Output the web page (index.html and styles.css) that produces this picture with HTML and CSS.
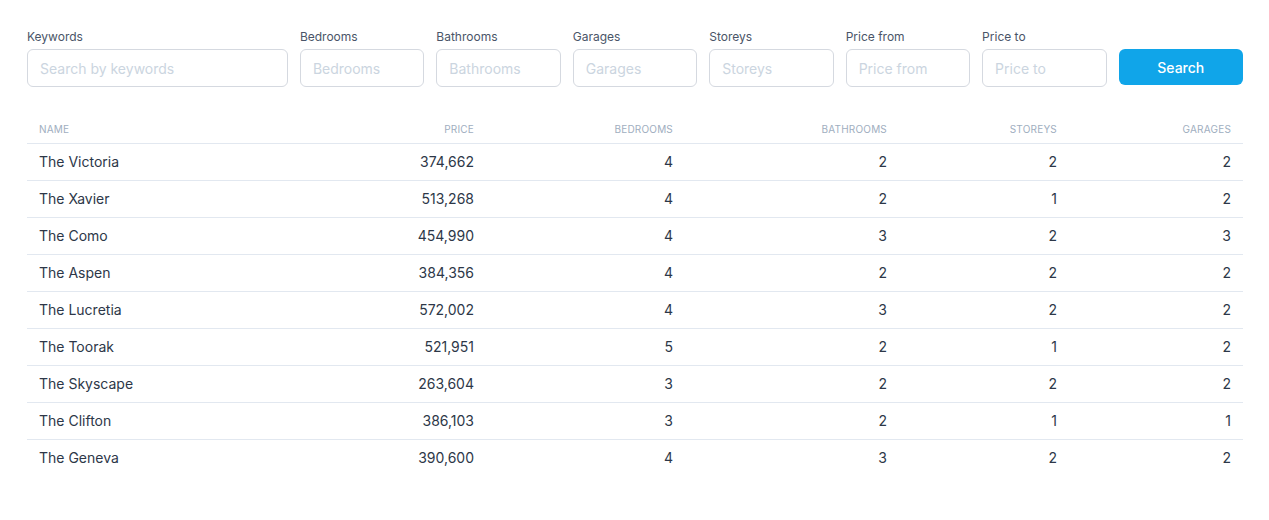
FILE: index.html
```html
<!DOCTYPE html>
<html>
<head>
<meta charset="utf-8">
<link rel="stylesheet" href="styles.css">
</head>
<body>
<div class="page">
  <form class="filters">
    <div class="field wide">
      <label>Keywords</label>
      <input type="text" placeholder="Search by keywords">
    </div>
    <div class="field">
      <label>Bedrooms</label>
      <input type="text" placeholder="Bedrooms">
    </div>
    <div class="field">
      <label>Bathrooms</label>
      <input type="text" placeholder="Bathrooms">
    </div>
    <div class="field">
      <label>Garages</label>
      <input type="text" placeholder="Garages">
    </div>
    <div class="field">
      <label>Storeys</label>
      <input type="text" placeholder="Storeys">
    </div>
    <div class="field">
      <label>Price from</label>
      <input type="text" placeholder="Price from">
    </div>
    <div class="field">
      <label>Price to</label>
      <input type="text" placeholder="Price to">
    </div>
    <div class="field action">
      <button type="button" class="btn">Search</button>
    </div>
  </form>

  <table class="results">
    <colgroup>
      <col class="c-name"><col class="c-price"><col class="c-bed"><col class="c-bath"><col class="c-storey"><col class="c-garage">
    </colgroup>
    <thead>
      <tr><th class="left">Name</th><th>Price</th><th>Bedrooms</th><th>Bathrooms</th><th>Storeys</th><th>Garages</th></tr>
    </thead>
    <tbody>
      <tr><td class="left">The Victoria</td><td>374,662</td><td>4</td><td>2</td><td>2</td><td>2</td></tr>
      <tr><td class="left">The Xavier</td><td>513,268</td><td>4</td><td>2</td><td>1</td><td>2</td></tr>
      <tr><td class="left">The Como</td><td>454,990</td><td>4</td><td>3</td><td>2</td><td>3</td></tr>
      <tr><td class="left">The Aspen</td><td>384,356</td><td>4</td><td>2</td><td>2</td><td>2</td></tr>
      <tr><td class="left">The Lucretia</td><td>572,002</td><td>4</td><td>3</td><td>2</td><td>2</td></tr>
      <tr><td class="left">The Toorak</td><td>521,951</td><td>5</td><td>2</td><td>1</td><td>2</td></tr>
      <tr><td class="left">The Skyscape</td><td>263,604</td><td>3</td><td>2</td><td>2</td><td>2</td></tr>
      <tr><td class="left">The Clifton</td><td>386,103</td><td>3</td><td>2</td><td>1</td><td>1</td></tr>
      <tr><td class="left">The Geneva</td><td>390,600</td><td>4</td><td>3</td><td>2</td><td>2</td></tr>
    </tbody>
  </table>
</div>
</body>
</html>
```
FILE: styles.css
```css
* { box-sizing: border-box; }
html, body { margin: 0; padding: 0; background: #fff; }
body {
  font-family: Inter, "Noto Sans", "Liberation Sans", sans-serif;
  color: #2d3748;
}
.page {
  padding: 29px 26px 0 27px;
}
.filters {
  display: grid;
  grid-template-columns: repeat(9, minmax(0, 1fr));
  column-gap: 12px;
  margin: 0;
}
.field {
  display: flex;
  flex-direction: column;
  min-width: 0;
}
.field.wide { grid-column: span 2; }
.field label {
  font-size: 12px;
  line-height: 16px;
  color: #4a5568;
  margin-bottom: 4px;
  white-space: nowrap;
}
.field input {
  width: 100%;
  min-width: 0;
  height: 38px;
  border: 1px solid #d5d9e0;
  border-radius: 6px;
  padding: 0 12px;
  font-family: inherit;
  font-size: 14px;
  color: #2d3748;
  background: #fff;
  outline: none;
}
.field input::placeholder { color: #cbd5e0; }
.field.action { justify-content: flex-start; padding-top: 20px; }
.btn {
  width: 100%;
  height: 36px;
  border: none;
  border-radius: 6px;
  background: #10a5e9;
  color: #fff;
  font-family: inherit;
  font-size: 14px;
  font-weight: 500;
  cursor: pointer;
}
.results {
  width: 100%;
  border-collapse: collapse;
  table-layout: fixed;
  margin-top: 20px;
}
.c-name { width: 230px; }
.c-price { width: 229px; }
.c-bed { width: 199px; }
.c-bath { width: 214px; }
.c-storey { width: 170px; }
.c-garage { width: 174px; }
.results th {
  font-size: 10px;
  font-weight: 400;
  text-transform: uppercase;
  letter-spacing: 0.02em;
  color: #a0aec0;
  text-align: right;
  padding: 15px 12px 7px;
  line-height: 14px;
  border-bottom: 1px solid #e2e8f0;
}
.results td {
  font-size: 14px;
  line-height: 16px;
  color: #2d3748;
  text-align: right;
  padding: 10px 12px;
  border-bottom: 1px solid #e2e8f0;
}
.results tbody tr:last-child td { border-bottom: none; }
.results .left { text-align: left; }
```
